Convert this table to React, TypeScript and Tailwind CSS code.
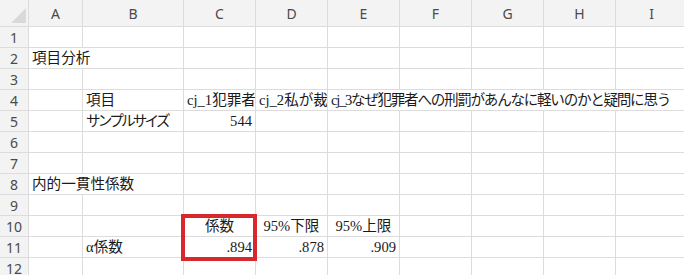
import React from 'react';

type Align = 'left' | 'right' | 'center';

type Cell = {
  col: number; // 0 = A
  text: string;
  align?: Align;
  span?: number;
  clip?: boolean;
  tight?: string; // letter-spacing for kana-heavy strings
};

const COLUMNS = ['A', 'B', 'C', 'D', 'E', 'F', 'G', 'H', 'I'];

const ROWS: Cell[][] = [
  [],
  [{ col: 0, text: '項目分析', span: 2 }],
  [],
  [
    { col: 1, text: '項目' },
    { col: 2, text: 'cj_1犯罪者', clip: true },
    { col: 3, text: 'cj_2私が裁', clip: true },
    {
      col: 4,
      text: 'cj_3なぜ犯罪者への刑罰があんなに軽いのかと疑問に思う',
      span: 5,
      tight: 'tracking-[-1.3px]',
    },
  ],
  [
    { col: 1, text: 'サンプルサイズ', tight: 'tracking-[-2.8px]' },
    { col: 2, text: '544', align: 'right' },
  ],
  [],
  [],
  [{ col: 0, text: '内的一貫性係数', span: 2 }],
  [],
  [
    { col: 2, text: '係数', align: 'center' },
    { col: 3, text: '95%下限', align: 'center' },
    { col: 4, text: '95%上限', align: 'center' },
  ],
  [
    { col: 1, text: 'α係数' },
    { col: 2, text: '.894', align: 'right' },
    { col: 3, text: '.878', align: 'right' },
    { col: 4, text: '.909', align: 'right' },
  ],
  [],
];

const cellFont = "font-['Liberation_Serif','Noto_Sans_CJK_JP',serif] text-[14.6px] text-[#1a1a1a]";
const headFont = "font-['Noto_Sans','Open_Sans',sans-serif] text-[14px] text-[#4a4a4a]";

const spanClass: Record<number, string> = {
  1: 'col-span-1',
  2: 'col-span-2',
  5: 'col-span-5',
};

const alignClass: Record<Align, string> = {
  left: 'justify-start pl-[3px]',
  right: 'justify-end pr-[3px]',
  center: 'justify-center',
};

function rowCells(cells: Cell[], r: number) {
  const out: React.ReactNode[] = [];
  let c = 0;
  while (c < COLUMNS.length) {
    const cell = cells.find((x) => x.col === c);
    const span = cell?.span ?? 1;
    out.push(
      <div
        key={`${r}-${c}`}
        className={`${spanClass[span]} flex items-center whitespace-nowrap bg-white ${cellFont} ${
          cell?.clip ? 'overflow-hidden' : ''
        } ${alignClass[cell?.align ?? 'left']}`}
      >
        {cell && <span className={`leading-none pt-[1px] ${cell.tight ?? ''}`}>{cell.text}</span>}
      </div>
    );
    c += span;
  }
  return out;
}

export default function App() {
  return (
    <div className="relative w-[684px] h-[275px] overflow-hidden bg-white">
      {/* the sheet: 1px gaps on a grey ground draw the gridlines */}
      <div className="grid grid-cols-[28px_53px_100px_71px_71px_71px_71px_71px_71px_71px] grid-rows-[26px_repeat(12,20px)] gap-px bg-[#dcdcdc] w-max">
        <div className="relative bg-[#f3f3f3]">
          <svg className="absolute right-[2px] bottom-[3px]" width="15" height="15" viewBox="0 0 15 15">
            <polygon points="15,0 15,15 0,15" fill="#d9d9d9" />
          </svg>
        </div>
        {COLUMNS.map((l) => (
          <div key={l} className={`flex items-center justify-center bg-[#f3f3f3] ${headFont}`}>
            {l}
          </div>
        ))}

        {ROWS.map((cells, i) => (
          <React.Fragment key={i}>
            <div className={`flex items-center justify-center bg-[#f3f3f3] ${headFont}`}>{i + 1}</div>
            {rowCells(cells, i)}
          </React.Fragment>
        ))}
      </div>

      {/* highlight around the coefficient */}
      <div className="absolute left-[181px] top-[214px] w-[76px] h-[47px] border-4 border-[#d7282d]" />
    </div>
  );
}
